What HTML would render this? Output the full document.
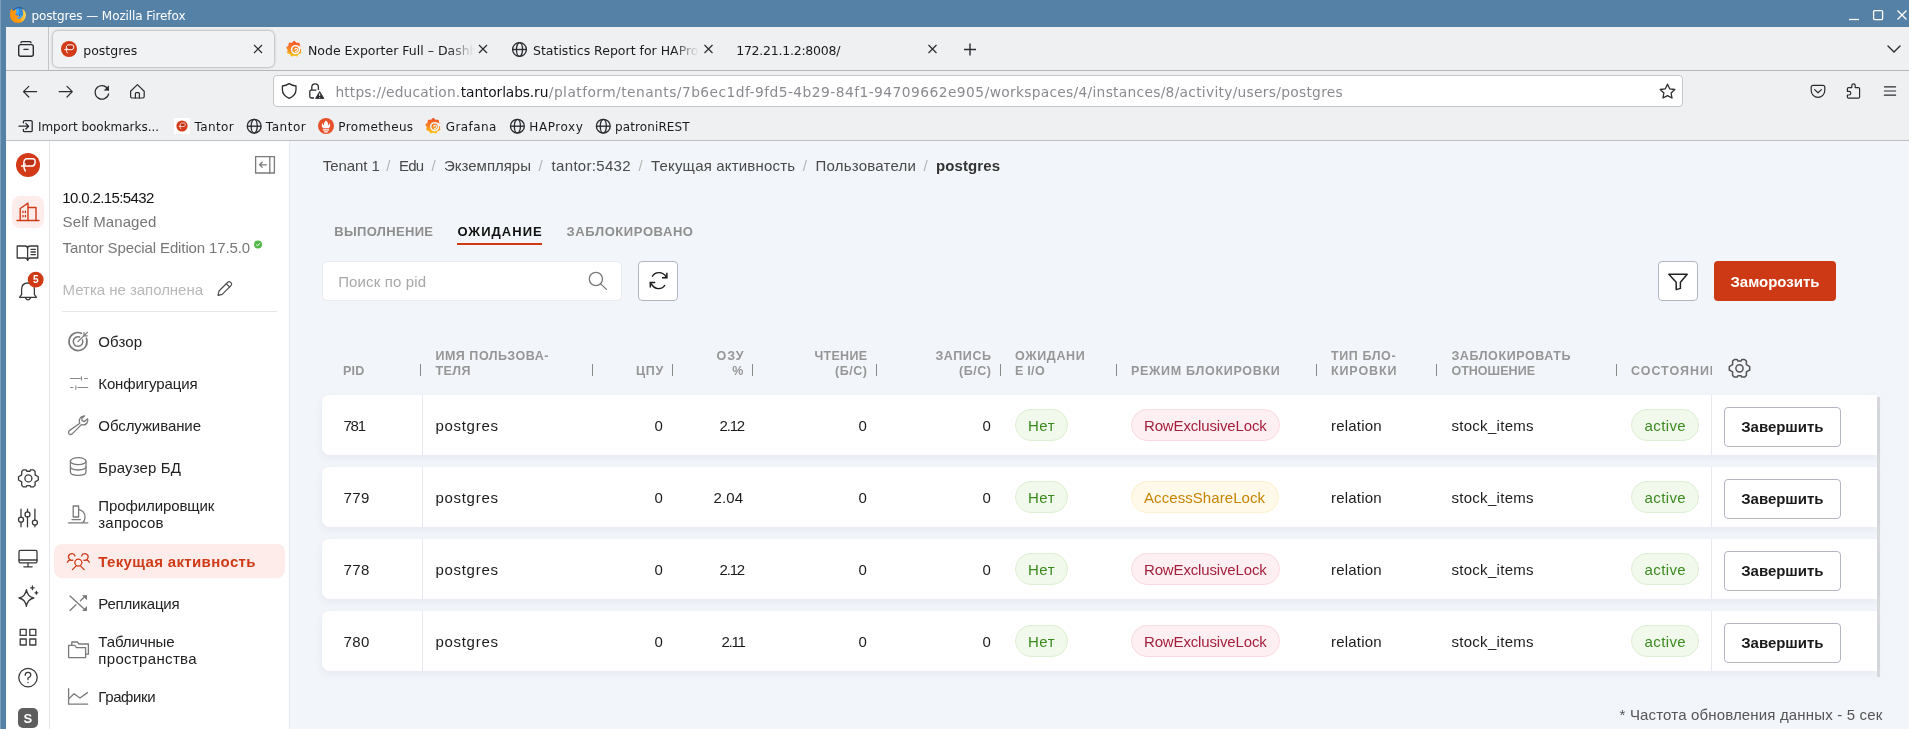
<!DOCTYPE html>
<html lang="ru">
<head>
<meta charset="utf-8">
<title>postgres</title>
<style>
*{box-sizing:border-box;margin:0;padding:0}
html,body{width:1909px;height:729px;overflow:hidden;background:#f2f5fa}
body{position:relative;will-change:transform;font-family:"Liberation Sans",sans-serif;font-size:15px;color:#1c1c1c}
.a{position:absolute}
.t{position:absolute;white-space:nowrap;line-height:1}
svg{position:absolute;overflow:visible}
/* browser chrome */
#titlebar{position:absolute;left:0;top:0;width:1909px;height:27px;background:#5581a6}
#leftborder{position:absolute;left:0;top:0;width:6px;height:729px;background:#5581a6}
#leftedge{position:absolute;left:0;top:0;width:1px;height:729px;background:#7c9fbd}
#chrome{position:absolute;left:6px;top:27px;width:1903px;height:114px;background:#eff0f2}
#tabline{position:absolute;left:6px;top:70px;width:1903px;height:1px;background:#b4b5b8}
#chromeend{position:absolute;left:6px;top:140px;width:1903px;height:1px;background:#bfc0c3}
#tabsep{position:absolute;left:48px;top:27px;width:1px;height:43px;background:#c3c4c7}
#tab1{position:absolute;left:53px;top:31px;width:221px;height:36px;border-radius:5px;background:#f1f2f4;box-shadow:0 0 3px rgba(0,0,0,.42)}
#urlbar{position:absolute;left:273px;top:75px;width:1410px;height:32px;border-radius:4px;background:#fff;border:1px solid #c6c7ca}
.fade{position:absolute;overflow:hidden;height:20px;-webkit-mask-image:linear-gradient(to right,#000 calc(100% - 26px),transparent);mask-image:linear-gradient(to right,#000 calc(100% - 26px),transparent)}
/* app */
#rail{position:absolute;left:6px;top:141px;width:43px;height:588px;background:#fff}
#railline{position:absolute;left:49px;top:141px;width:1px;height:588px;background:#e4e6ee}
#panel{position:absolute;left:50px;top:141px;width:239px;height:588px;background:#fff}
#panelline{position:absolute;left:289px;top:141px;width:1px;height:588px;background:#e8eaf2}
.row{position:absolute;left:322px;width:1555px;height:60px;background:#fff;border-radius:8px 0 0 8px;box-shadow:0 3px 8px rgba(70,80,120,.07)}
.csep{position:absolute;top:0;width:1px;height:60px;background:#e6e8f0}
.badge{position:absolute;height:32px;border-radius:16px;border:1px solid}
.g{background:#f1f9ed;border-color:#dcf0d3}
.rd{background:#fdeff2;border-color:#fbdbe1}
.yl{background:#fff9ea;border-color:#fdf0cc}
.hs{position:absolute;top:364px;width:1px;height:12px;background:#8a8a8a}
.btn{position:absolute;border:1px solid #b2b6c2;border-radius:4px;background:#fff}
</style>
</head>
<body>
<div id="titlebar"></div><div id="leftborder"></div><div id="leftedge"></div>
<div id="chrome"></div><div id="tabline"></div><div id="chromeend"></div><div id="tabsep"></div>
<div id="tab1"></div><div id="urlbar"></div>
<svg width="1909" height="145" viewBox="0 0 1909 145" style="left:0;top:0">
<defs><linearGradient id="ffg" x1="0" y1="0" x2="1" y2="0"><stop offset="0" stop-color="#ff9200"/><stop offset="0.6" stop-color="#ff9a0a"/><stop offset="0.85" stop-color="#ffc23a"/><stop offset="1" stop-color="#ffd95a"/></linearGradient></defs>
<circle cx="18.7" cy="13.3" r="6.3" fill="#3ea6f4"/>
<path d="M13.2 10.2Q18.4 5.2 23.6 9.6" fill="none" stroke="#285f9c" stroke-width="1.3"/>
<path d="M19.6 8.2Q20.8 12 19.2 16.8M21.6 10Q23 12.6 21.4 15.6M15.4 14.6L18 15.4" fill="none" stroke="#2a6cb4" stroke-width="1"/>
<path d="M11.3 8.8L13.4 10.9L15.9 9.3L16.5 12Q15 13.4 15.4 15Q17.6 15.3 19.8 16.2Q18.4 17.2 17 17.6Q17.4 19.3 19.4 19Q22.6 18 23.2 14Q23.4 11 21.6 8.4Q25.8 10.6 25.9 15A8 8 0 0 1 9.9 15Q9.8 11 11.3 8.8Z" fill="url(#ffg)"/>
<path d="M1849 19.5H1859" stroke="#fff" stroke-width="1.3"/>
<rect x="1873.6" y="10.6" width="9" height="9" rx="1" fill="none" stroke="#fff" stroke-width="1.3"/>
<path d="M1897.5 10.5L1906.5 19.5M1906.5 10.5L1897.5 19.5" stroke="#fff" stroke-width="1.3" fill="none"/>
<g fill="none" stroke="#2b2b30" stroke-width="1.4" stroke-linecap="round"><rect x="18.7" y="44.6" width="14.6" height="11.6" rx="2"/><path d="M21 42.8Q21 41.6 22.2 41.6H29.8Q31 41.6 31 42.8"/><path d="M24 49.4H28"/></g>
<g transform="translate(69 49) scale(0.667)"><circle r="12" fill="#d23a18"/><path d="M-2.6 -5.4 L5 -5.4 Q7.2 -5.2 6.8 -2.6 Q6.4 0.6 4 0.6 L-3.6 0.6 Q-4.4 -3.6 -2.6 -5.4Z" fill="#b53014"/><path d="M-6.4 1 L4.4 1 Q6.8 0.8 7.1 -2.6 Q7.4 -6.2 4.6 -6.2 L-1.6 -6.2 Q-4.4 -5.6 -4.2 -0.4 Q-4.2 4.2 -2.6 6" fill="none" stroke="#fff" stroke-width="1.45" stroke-linecap="round" stroke-linejoin="round"/><circle cx="-3" cy="-0.9" r="0.9" fill="#fff"/></g>
<path d="M254.0 45.0L262.0 53.0M262.0 45.0L254.0 53.0" stroke="#2b2b30" stroke-width="1.15" fill="none"/>
<defs><linearGradient id="gf294" gradientUnits="userSpaceOnUse" x1="0" y1="41.5" x2="0" y2="56.5"><stop offset="0" stop-color="#f8512a"/><stop offset="0.55" stop-color="#f98a1f"/><stop offset="1" stop-color="#fdc81a"/></linearGradient></defs><polygon points="294.20,41.50 296.25,43.36 299.02,43.25 299.40,46.00 301.59,47.70 300.11,50.04 300.70,52.75 298.06,53.60 296.77,56.05 294.20,55.00 291.63,56.05 290.34,53.60 287.70,52.75 288.29,50.04 286.81,47.70 289.00,46.00 289.38,43.25 292.15,43.36" fill="url(#gf294)" stroke="url(#gf294)" stroke-width="1.2" stroke-linejoin="round"/><circle cx="295.5" cy="49.6" r="3.9" fill="none" stroke="#f3f3f5" stroke-width="1.5"/><path d="M297.59999999999997 45.4L302.2 47L301.8 49.6L299.2 48.4Z" fill="#f3f3f5"/><path d="M295.4 51.6Q297.59999999999997 51.4 297.59999999999997 49.6Q297.4 48.2 296.0 48.2Q294.8 48.4 294.8 49.6" fill="none" stroke="#f3f3f5" stroke-width="1.1" stroke-linecap="round"/>
<path d="M479.0 45.0L487.0 53.0M487.0 45.0L479.0 53.0" stroke="#2b2b30" stroke-width="1.15" fill="none"/>
<g transform="translate(519.5 49.5)" fill="none" stroke="#2b2b30" stroke-width="1.35"><circle r="6.9"/><ellipse rx="3.04" ry="6.9"/><path d="M-6.9 0H6.9"/></g>
<path d="M704.5 45.0L712.5 53.0M712.5 45.0L704.5 53.0" stroke="#2b2b30" stroke-width="1.15" fill="none"/>
<path d="M928.5 45.0L936.5 53.0M936.5 45.0L928.5 53.0" stroke="#2b2b30" stroke-width="1.15" fill="none"/>
<path d="M964 49.5H976M970 43.5V55.5" stroke="#2b2b30" stroke-width="1.4" fill="none"/>
<path d="M1888 46L1894 52L1900 46" stroke="#2b2b30" stroke-width="1.4" fill="none" stroke-linecap="round" stroke-linejoin="round"/>
<g fill="none" stroke="#2b2b30" stroke-width="1.2" stroke-linecap="round" stroke-linejoin="round"><path d="M36.6 91.7H23.6M28.8 86.4L23.5 91.7L28.8 97"/><path d="M59.2 91.7H72.2M67 86.4L72.3 91.7L67 97"/><path d="M108.4 90.2A6.8 6.8 0 1 0 108.6 93.8"/><path d="M130.6 91.2L137.4 84.6L144.2 91.2V96.6Q144.2 98 142.8 98H132Q130.6 98 130.6 96.6Z"/><path d="M135.4 98V93.6Q135.4 92.6 136.4 92.6H138.4Q139.4 92.6 139.4 93.6V98"/></g>
<path d="M108.9 85.2V90.4H103.7Z" fill="#2b2b30"/>
<g fill="none" stroke="#2b2b30" stroke-width="1.3" stroke-linejoin="round"><path d="M289.2 83.6Q292.6 85.6 296 86V89.6Q296 95.6 289.2 98.4Q282.4 95.6 282.4 89.6V86Q285.8 85.6 289.2 83.6Z"/><path d="M316.4 90.2H311.2Q309.8 90.2 309.8 91.6V96.6Q309.8 98 311.2 98H314"/><path d="M311.8 90V87.2A3.3 3.3 0 0 1 318.4 87.2V90"/><path d="M1667.5 84.2L1669.7 88.8L1674.8 89.5L1671.1 93L1672 98L1667.5 95.6L1663 98L1663.9 93L1660.2 89.5L1665.3 88.8Z"/></g>
<path d="M319.7 91.6L323.8 98.4H315.6Z" fill="#2b2b30" stroke="#2b2b30" stroke-width="0.9" stroke-linejoin="round"/><path d="M319.7 93.4V96M319.7 97V97.9" stroke="#fff" stroke-width="1"/>
<g fill="none" stroke="#2b2b30" stroke-width="1.2" stroke-linecap="round" stroke-linejoin="round"><path d="M1813.2 85.4H1822.8Q1824.8 85.4 1824.8 87.4V90.6A6.8 6.8 0 0 1 1811.2 90.6V87.4Q1811.2 85.4 1813.2 85.4Z"/><path d="M1814.6 89.6L1818 92.8L1821.4 89.6"/><path d="M1851.8 87.6V85.6A1.7 1.7 0 0 1 1855.2 85.6V87.6H1858.4Q1859.6 87.6 1859.6 88.8V97Q1859.6 98.2 1858.4 98.2H1848.6Q1847.4 98.2 1847.4 97V95H1849A1.7 1.7 0 0 0 1849 91.4H1847.4V88.8Q1847.4 87.6 1848.6 87.6Z"/><path d="M1884.4 86.8H1895.6M1884.4 91H1895.6M1884.4 95.2H1895.6"/></g>
<g fill="none" stroke="#2b2b30" stroke-width="1.3" stroke-linecap="round" stroke-linejoin="round"><path d="M23.4 122.8V121.8Q23.4 120.6 24.6 120.6H31Q32.2 120.6 32.2 121.8V130.4Q32.2 131.6 31 131.6H24.6Q23.4 131.6 23.4 130.4V129.4"/><path d="M19 126.2H28.4M25.8 123.4L28.6 126.2L25.8 129"/></g>
<rect x="174" y="118" width="16" height="16" fill="#fff"/>
<g transform="translate(182 126) scale(0.467)"><circle r="12" fill="#d23a18"/><path d="M-2.6 -5.4 L5 -5.4 Q7.2 -5.2 6.8 -2.6 Q6.4 0.6 4 0.6 L-3.6 0.6 Q-4.4 -3.6 -2.6 -5.4Z" fill="#b53014"/><path d="M-6.4 1 L4.4 1 Q6.8 0.8 7.1 -2.6 Q7.4 -6.2 4.6 -6.2 L-1.6 -6.2 Q-4.4 -5.6 -4.2 -0.4 Q-4.2 4.2 -2.6 6" fill="none" stroke="#fff" stroke-width="1.45" stroke-linecap="round" stroke-linejoin="round"/><circle cx="-3" cy="-0.9" r="0.9" fill="#fff"/></g>
<g transform="translate(254.2 126.2)" fill="none" stroke="#2b2b30" stroke-width="1.35"><circle r="6.9"/><ellipse rx="3.04" ry="6.9"/><path d="M-6.9 0H6.9"/></g>
<circle cx="326" cy="126" r="8" fill="#e6522c"/><path d="M326 120.4Q328.9 123 327.9 125.4Q329.9 125 329.3 122.8Q331.3 126 328.9 128.2H323.1Q320.7 126 322.7 122.8Q322.5 125 324.1 125.4Q323.3 122.6 326 120.4ZM322.9 129.2H329.1V130.4H322.9ZM323.9 131.2H328.1V132Q326 133 323.9 132Z" fill="#fff"/>
<defs><linearGradient id="gf433" gradientUnits="userSpaceOnUse" x1="0" y1="118.5" x2="0" y2="133.5"><stop offset="0" stop-color="#f8512a"/><stop offset="0.55" stop-color="#f98a1f"/><stop offset="1" stop-color="#fdc81a"/></linearGradient></defs><polygon points="433.30,118.50 435.35,120.36 438.12,120.25 438.50,123.00 440.69,124.70 439.21,127.04 439.80,129.75 437.16,130.60 435.87,133.05 433.30,132.00 430.73,133.05 429.44,130.60 426.80,129.75 427.39,127.04 425.91,124.70 428.10,123.00 428.48,120.25 431.25,120.36" fill="url(#gf433)" stroke="url(#gf433)" stroke-width="1.2" stroke-linejoin="round"/><circle cx="434.6" cy="126.6" r="3.9" fill="none" stroke="#f3f3f5" stroke-width="1.5"/><path d="M436.7 122.4L441.3 124L440.90000000000003 126.6L438.3 125.4Z" fill="#f3f3f5"/><path d="M434.5 128.6Q436.7 128.4 436.7 126.6Q436.5 125.2 435.1 125.2Q433.90000000000003 125.4 433.90000000000003 126.6" fill="none" stroke="#f3f3f5" stroke-width="1.1" stroke-linecap="round"/>
<g transform="translate(517.4 126.2)" fill="none" stroke="#2b2b30" stroke-width="1.35"><circle r="6.9"/><ellipse rx="3.04" ry="6.9"/><path d="M-6.9 0H6.9"/></g>
<g transform="translate(603.3 126.2)" fill="none" stroke="#2b2b30" stroke-width="1.35"><circle r="6.9"/><ellipse rx="3.04" ry="6.9"/><path d="M-6.9 0H6.9"/></g>
</svg>
<span class="t" style='top:10px;font-size:12px;color:#fff;left:31.4px;letter-spacing:-0.09px;font-family:"DejaVu Sans","Liberation Sans",sans-serif;'>postgres — Mozilla Firefox</span>
<span class="t" style='top:45px;font-size:12.5px;color:#1b1b1f;left:83.3px;letter-spacing:-0.01px;font-family:"DejaVu Sans","Liberation Sans",sans-serif;'>postgres</span>
<div class="fade" style="left:308px;top:39px;width:166px"><span class="t" style='top:6px;font-size:12.5px;color:#1b1b1f;left:0.0px;font-family:"DejaVu Sans","Liberation Sans",sans-serif;'>Node Exporter Full – Dashboards – Grafana</span></div>
<div class="fade" style="left:533px;top:39px;width:166px"><span class="t" style='top:6px;font-size:12.5px;color:#1b1b1f;left:0.0px;font-family:"DejaVu Sans","Liberation Sans",sans-serif;'>Statistics Report for HAProxy</span></div>
<span class="t" style='top:45px;font-size:12.5px;color:#1b1b1f;left:736.2px;letter-spacing:-0.24px;font-family:"DejaVu Sans","Liberation Sans",sans-serif;'>172.21.1.2:8008/</span>
<span class="t" style='top:86px;font-size:13.8px;color:#8a8a90;left:335.4px;letter-spacing:0.15px;font-family:"DejaVu Sans","Liberation Sans",sans-serif;'>https://education.</span>
<span class="t" style='top:86px;font-size:13.8px;color:#15141a;left:460.8px;letter-spacing:-0.13px;font-family:"DejaVu Sans","Liberation Sans",sans-serif;'>tantorlabs.ru</span>
<span class="t" style='top:86px;font-size:13.8px;color:#8a8a90;left:548.8px;letter-spacing:0.45px;font-family:"DejaVu Sans","Liberation Sans",sans-serif;'>/platform/tenants/7b6ec1df-9fd5-4b29-84f1-94709662e905</span>
<span class="t" style='top:86px;font-size:13.8px;color:#8a8a90;left:984.8px;letter-spacing:0.28px;font-family:"DejaVu Sans","Liberation Sans",sans-serif;'>/workspaces/4/instances/8/activity/users/postgres</span>
<span class="t" style='top:121px;font-size:12px;color:#1b1b1f;left:37.9px;letter-spacing:-0.02px;font-family:"DejaVu Sans","Liberation Sans",sans-serif;'>Import bookmarks...</span>
<span class="t" style='top:121px;font-size:12px;color:#1b1b1f;left:194.4px;letter-spacing:0.40px;font-family:"DejaVu Sans","Liberation Sans",sans-serif;'>Tantor</span>
<span class="t" style='top:121px;font-size:12px;color:#1b1b1f;left:265.8px;letter-spacing:0.52px;font-family:"DejaVu Sans","Liberation Sans",sans-serif;'>Tantor</span>
<span class="t" style='top:121px;font-size:12px;color:#1b1b1f;left:338.3px;letter-spacing:0.35px;font-family:"DejaVu Sans","Liberation Sans",sans-serif;'>Prometheus</span>
<span class="t" style='top:121px;font-size:12px;color:#1b1b1f;left:445.7px;letter-spacing:0.41px;font-family:"DejaVu Sans","Liberation Sans",sans-serif;'>Grafana</span>
<span class="t" style='top:121px;font-size:12px;color:#1b1b1f;left:529.3px;letter-spacing:0.57px;font-family:"DejaVu Sans","Liberation Sans",sans-serif;'>HAProxy</span>
<span class="t" style='top:121px;font-size:12px;color:#1b1b1f;left:615.0px;letter-spacing:0.11px;font-family:"DejaVu Sans","Liberation Sans",sans-serif;'>patroniREST</span>
<div id="rail"></div><div id="railline"></div><div id="panel"></div><div id="panelline"></div>
<div class="a" style="left:12px;top:196px;width:32px;height:32px;border-radius:8px;background:#fdecea"></div>
<div class="a" style="left:54px;top:544px;width:231px;height:34px;border-radius:8px;background:#fdecea"></div>
<div class="a" style="left:62px;top:311px;width:215px;height:1px;background:#e4e6ee"></div>
<div class="a" style="left:18px;top:708px;width:20px;height:20px;border-radius:5px;background:#5e5e5e"></div>
<svg width="300" height="588" viewBox="0 141 300 588" style="left:0;top:141px">
<g transform="translate(28 165) scale(1.000)"><circle r="12" fill="#d23a18"/><path d="M-2.6 -5.4 L5 -5.4 Q7.2 -5.2 6.8 -2.6 Q6.4 0.6 4 0.6 L-3.6 0.6 Q-4.4 -3.6 -2.6 -5.4Z" fill="#b53014"/><path d="M-6.4 1 L4.4 1 Q6.8 0.8 7.1 -2.6 Q7.4 -6.2 4.6 -6.2 L-1.6 -6.2 Q-4.4 -5.6 -4.2 -0.4 Q-4.2 4.2 -2.6 6" fill="none" stroke="#fff" stroke-width="1.45" stroke-linecap="round" stroke-linejoin="round"/><circle cx="-3" cy="-0.9" r="0.9" fill="#fff"/></g>
<g fill="none" stroke="#cf3a17" stroke-width="1.4" stroke-linejoin="round" stroke-linecap="round"><path d="M17 220.5H39"/><path d="M20.2 220.5V208.5L28 203.2V220.5"/><path d="M28 207.5H36V220.5"/><path d="M23 211.2V212.6M25.4 211.2V212.6M23 215.4V216.8M25.4 215.4V216.8"/></g>
<g fill="none" stroke="#3a3a3a" stroke-width="1.3" stroke-linejoin="round" stroke-linecap="round"><path d="M17.2 246V258H25Q27.4 258 27.6 260.4Q27.8 258 30.2 258H37.8V246H30.2Q27.6 246 27.6 248.4Q27.6 246 25 246Z"/><path d="M27.6 248.4V260"/><path d="M31 249.4H35.4M31 252H35.4M31 254.6H35.4"/></g>
<g fill="none" stroke="#3a3a3a" stroke-width="1.3" stroke-linejoin="round" stroke-linecap="round"><path d="M19.6 297.4L21.6 294.4V289.4Q21.6 283 28 283Q34.4 283 34.4 289.4V294.4L36.4 297.4Z"/><path d="M25.4 297.8Q28 302 30.6 297.8"/></g>
<circle cx="35.7" cy="279.7" r="7.9" fill="#cf3a17"/>
<g transform="translate(28.4 478.4) scale(0.97)" fill="none" stroke="#3a3a3a" stroke-width="1.35" stroke-linejoin="round"><path d="M-5.1 -8.8H-2.3L-1.7 -7.4H1.7L2.3 -8.8H5.1L6.9 -7.2V-3.6L10.2 -1.7V1.7L6.9 3.6V7.2L5.1 8.8H2.3L1.7 7.4H-1.7L-2.3 8.8H-5.1L-6.9 7.2V3.6L-10.2 1.7V-1.7L-6.9 -3.6V-7.2Z"/><circle r="3.6"/></g>
<g fill="none" stroke="#3a3a3a" stroke-width="1.3" stroke-linecap="round"><path d="M21 509.2V517.2M21 522.2V526.8M27.5 509.2V511.8M27.5 517V526.8M34.9 509.2V520M34.9 525.2V526.8"/><circle cx="21" cy="519.7" r="2.5"/><circle cx="27.5" cy="514.4" r="2.5"/><circle cx="34.9" cy="522.6" r="2.5"/></g>
<g fill="none" stroke="#3a3a3a" stroke-width="1.3" stroke-linejoin="round" stroke-linecap="round"><rect x="19" y="550.4" width="18" height="12.4" rx="1.4"/><path d="M19 560H37M28 563V566.6M23.8 566.8H32.2"/></g>
<g fill="none" stroke="#3a3a3a" stroke-width="1.3" stroke-linejoin="round" stroke-linecap="round"><path d="M26.4 589.6Q27.4 596.6 33.8 598Q27.4 599.4 26.4 606.4Q25.4 599.4 19 598Q25.4 596.6 26.4 589.6Z"/><path d="M32.4 586V589.6M30.6 587.8H34.2M36.4 591.4V594.2M35 592.8H37.8"/></g>
<g fill="none" stroke="#3a3a3a" stroke-width="1.3" stroke-linejoin="round"><rect x="20.2" y="629.4" width="6" height="6"/><rect x="29.8" y="629.4" width="6" height="6"/><rect x="20.2" y="639" width="6" height="6"/><rect x="29.8" y="639" width="6" height="6"/></g>
<g fill="none" stroke="#3a3a3a" stroke-width="1.3" stroke-linecap="round"><circle cx="28" cy="677.6" r="9.2"/><path d="M25.2 675.2Q25.2 672.4 28 672.4Q30.8 672.4 30.8 675Q30.8 676.8 28 678V679.6"/><path d="M28 682.4V682.6"/></g>
<g fill="none" stroke="#7a7a7a" stroke-width="1.3" stroke-linejoin="round" stroke-linecap="round"><rect x="255.6" y="156.6" width="18.8" height="16.4"/><path d="M269.8 156.6V173"/><path d="M266.4 164.8H259.6M262.2 162.2L259.6 164.8L262.2 167.4"/></g>
<circle cx="258" cy="244.4" r="4" fill="#52b848"/><path d="M256.2 244.5L257.6 245.9L260 243.2" fill="none" stroke="#fff" stroke-width="1"/>
<g fill="none" stroke="#4a4a4a" stroke-width="1.15" stroke-linejoin="round" stroke-linecap="round"><path d="M218 295.4L219 291L228 282Q229.2 281 230.4 282.2L231.2 283Q232.2 284.2 231.2 285.4L222.2 294.4Z"/><path d="M226.4 283.8L229.6 287"/></g>
<g fill="none" stroke="#7a7a7a" stroke-width="1.3" stroke-linejoin="round" stroke-linecap="round"><path d="M86.4 338.2A9 9 0 1 1 81.4 333.2" stroke-width="1.7"/><path d="M82.6 340A4.8 4.8 0 1 1 79.6 337" stroke-width="1.5"/><path d="M78 341.6L87.4 332.4"/><path d="M84 335.8H87.2M84 335.8V332.6" /></g>
<g fill="none" stroke="#8a8a8a" stroke-width="1.1"><path d="M70 378.5H80.8M84 378.5H87.8M81.5 376.2V380.4M70 387.5H73.4M77.4 387.5H88.2M75.8 385.6V389.8"/></g>
<g fill="none" stroke="#7a7a7a" stroke-width="1.3" stroke-linejoin="round" stroke-linecap="round"><path d="M84.6 415.8Q80.4 416.2 79.4 419.8Q79 421.6 79.8 423.2L69.4 430.6Q67.6 432.4 69.2 434Q70.8 435.4 72.4 433.6L81.4 424.6Q85 425.8 87 423Q88.2 421 87.6 418.8L84.4 421.6L82 420.6L81.8 418.2Z"/></g>
<g fill="none" stroke="#7a7a7a" stroke-width="1.3" stroke-linejoin="round" stroke-linecap="round"><ellipse cx="78.2" cy="461.2" rx="7.8" ry="3.5"/><path d="M70.4 461.2V472Q70.4 475.4 78.2 475.4Q86 475.4 86 472V461.2"/><path d="M70.4 466.6Q70.4 470 78.2 470Q86 470 86 466.6"/></g>
<g fill="none" stroke="#7a7a7a" stroke-width="1.3" stroke-linejoin="round" stroke-linecap="round"><path d="M68.4 522.8H87.8"/><path d="M72 519.6H80.4"/><path d="M73.2 506V517H78.6V506Z"/><path d="M78.6 509.4Q85 511 85 517.2Q85 520.6 82.8 522.6"/></g>
<g fill="none" stroke="#cf3a17" stroke-width="1.3" stroke-linejoin="round" stroke-linecap="round"><circle cx="78.3" cy="562.6" r="3.5"/><path d="M75.8 566.4L72.4 569.6M80.8 566.4L84.2 569.6"/><path d="M75 556A3.3 3.3 0 1 0 72.8 560.2"/><path d="M70.4 559.8Q68 560.4 67.3 562.4"/><path d="M81.6 556A3.3 3.3 0 1 1 83.8 560.2"/><path d="M86.2 559.8Q88.6 560.4 89.3 562.4"/></g>
<g fill="none" stroke="#7a7a7a" stroke-width="1.3" stroke-linejoin="round" stroke-linecap="round"><path d="M70 596L85.6 610.2"/><path d="M70 610.4L76 604.8M80.4 600.8L85.6 596"/></g>
<path d="M87 595.2V600.2L82 595.2ZM87 611V606L82 611Z" fill="#7a7a7a"/>
<g fill="none" stroke="#7a7a7a" stroke-width="1.3" stroke-linejoin="round" stroke-linecap="round"><path d="M68.6 647.6V657.6H85.6V647.6H76.4L74.8 645.4H68.6Z"/><path d="M71.8 645.2V642H77.4L79 644H88.4V654.2H85.8"/></g>
<g fill="none" stroke="#7a7a7a" stroke-width="1.3" stroke-linejoin="round" stroke-linecap="round"><path d="M68.6 688.6V704.2H87.6"/><path d="M69 698.6L74 693.8L80 698L87.4 692.6"/></g>
</svg>
<span class="t" style='top:275px;font-size:10px;color:#fff;font-weight:bold;left:32.9px;'>5</span>
<span class="t" style='top:712px;font-size:13px;color:#fff;font-weight:bold;left:23.6px;'>S</span>
<span class="t" style='top:190px;font-size:15px;color:#111;left:62.3px;letter-spacing:-0.62px;'>10.0.2.15:5432</span>
<span class="t" style='top:214px;font-size:15px;color:#777;left:62.6px;letter-spacing:0.11px;'>Self Managed</span>
<span class="t" style='top:240px;font-size:15px;color:#777;left:62.6px;letter-spacing:-0.12px;'>Tantor Special Edition 17.5.0</span>
<span class="t" style='top:282px;font-size:15px;color:#b8b8b8;left:62.6px;letter-spacing:-0.03px;'>Метка не заполнена</span>
<span class="t" style='top:334px;font-size:15px;color:#222;left:98.3px;letter-spacing:0.09px;'>Обзор</span>
<span class="t" style='top:376px;font-size:15px;color:#222;left:98.3px;letter-spacing:-0.13px;'>Конфигурация</span>
<span class="t" style='top:418px;font-size:15px;color:#222;left:98.3px;letter-spacing:-0.08px;'>Обслуживание</span>
<span class="t" style='top:460px;font-size:15px;color:#222;left:98.3px;letter-spacing:0.14px;'>Браузер БД</span>
<span class="t" style='top:498px;font-size:15px;color:#222;left:98.3px;letter-spacing:-0.10px;'>Профилировщик</span>
<span class="t" style='top:515px;font-size:15px;color:#222;left:98.3px;letter-spacing:0.18px;'>запросов</span>
<span class="t" style='top:554px;font-size:15px;color:#cf3a17;left:98.3px;letter-spacing:0.35px;font-weight:bold;'>Текущая активность</span>
<span class="t" style='top:596px;font-size:15px;color:#222;left:98.3px;letter-spacing:-0.22px;'>Репликация</span>
<span class="t" style='top:634px;font-size:15px;color:#222;left:98.3px;letter-spacing:-0.10px;'>Табличные</span>
<span class="t" style='top:651px;font-size:15px;color:#222;left:98.3px;letter-spacing:0.33px;'>пространства</span>
<span class="t" style='top:689px;font-size:15px;color:#222;left:98.3px;letter-spacing:-0.39px;'>Графики</span>
<span class="t" style='top:158px;font-size:15px;color:#4a4a4a;left:322.8px;letter-spacing:-0.08px;'>Tenant 1</span>
<span class="t" style='top:158px;font-size:15px;color:#b5b5b5;left:386.2px;'>/</span>
<span class="t" style='top:158px;font-size:15px;color:#4a4a4a;left:399.0px;letter-spacing:-0.85px;'>Edu</span>
<span class="t" style='top:158px;font-size:15px;color:#b5b5b5;left:431.4px;'>/</span>
<span class="t" style='top:158px;font-size:15px;color:#4a4a4a;left:444.0px;'>Экземпляры</span>
<span class="t" style='top:158px;font-size:15px;color:#b5b5b5;left:538.6px;'>/</span>
<span class="t" style='top:158px;font-size:15px;color:#4a4a4a;left:551.6px;letter-spacing:0.31px;'>tantor:5432</span>
<span class="t" style='top:158px;font-size:15px;color:#b5b5b5;left:638.4px;'>/</span>
<span class="t" style='top:158px;font-size:15px;color:#4a4a4a;left:651.0px;letter-spacing:0.18px;'>Текущая активность</span>
<span class="t" style='top:158px;font-size:15px;color:#b5b5b5;left:802.8px;'>/</span>
<span class="t" style='top:158px;font-size:15px;color:#4a4a4a;left:815.4px;letter-spacing:0.24px;'>Пользователи</span>
<span class="t" style='top:158px;font-size:15px;color:#b5b5b5;left:923.4px;'>/</span>
<span class="t" style='top:158px;font-size:15px;color:#333;left:936.0px;letter-spacing:0.09px;font-weight:bold;'>postgres</span>
<span class="t" style='top:225px;font-size:13px;color:#8e8e8e;left:334.2px;letter-spacing:0.33px;font-weight:bold;'>ВЫПОЛНЕНИЕ</span>
<span class="t" style='top:225px;font-size:13px;color:#111;left:457.4px;letter-spacing:1.04px;font-weight:bold;'>ОЖИДАНИЕ</span>
<span class="t" style='top:225px;font-size:13px;color:#8e8e8e;left:566.6px;letter-spacing:0.59px;font-weight:bold;'>ЗАБЛОКИРОВАНО</span>
<div class="a" style="left:457px;top:243px;width:85px;height:2px;background:#cf3a17"></div>
<div class="a" style="left:322px;top:261px;width:300px;height:40px;border-radius:5px;background:#fff;border:1px solid #e9ebf2"></div>
<span class="t" style='top:274px;font-size:15px;color:#a8a8a8;left:338.2px;letter-spacing:0.13px;'>Поиск по pid</span>
<div class="btn" style="left:638px;top:261px;width:40px;height:40px"></div>
<div class="btn" style="left:1658px;top:261px;width:40px;height:40px"></div>
<div class="a" style="left:1714px;top:261px;width:122px;height:40px;border-radius:4px;background:#ce3915"></div>
<span class="t" style='top:274px;font-size:15px;color:#fff;left:1730.4px;font-weight:bold;'>Заморозить</span>
<svg width="1619" height="588" viewBox="290 141 1619 588" style="left:290px;top:141px">
<g fill="none" stroke="#777" stroke-width="1.3" stroke-linecap="round"><circle cx="595.9" cy="279" r="6.6"/><path d="M600.4 283.6L606.4 289.4"/></g>
<g fill="none" stroke="#1a1a1a" stroke-width="1.45" stroke-linejoin="miter"><path d="M652.2 276.6Q654.2 272.6 659 272.6Q663.6 272.6 666.2 276.8"/><path d="M666.9 272.8V277.7H662"/><path d="M664.9 285Q663 288.6 658.4 288.6Q653.8 288.6 651 283.4"/><path d="M650.3 287.4V282.5H655.2"/></g>
<g fill="none" stroke="#222" stroke-width="1.3" stroke-linejoin="round" stroke-linecap="round"><path d="M1668.8 274.2H1687.2L1680.4 282.2V288.4L1676.2 289.6V282.2Z" stroke-width="1.5"/></g>
<g transform="translate(1739.5 368.3) scale(1.0)" fill="none" stroke="#555" stroke-width="1.5" stroke-linejoin="round"><path d="M-5.1 -8.8H-2.3L-1.7 -7.4H1.7L2.3 -8.8H5.1L6.9 -7.2V-3.6L10.2 -1.7V1.7L6.9 3.6V7.2L5.1 8.8H2.3L1.7 7.4H-1.7L-2.3 8.8H-5.1L-6.9 7.2V3.6L-10.2 1.7V-1.7L-6.9 -3.6V-7.2Z"/><circle r="3.6"/></g>
</svg>
<span class="t" style='top:365px;font-size:12.5px;color:#969696;left:343.0px;letter-spacing:0.28px;font-weight:bold;'>PID</span>
<span class="t" style='top:350px;font-size:12.5px;color:#969696;left:435.4px;letter-spacing:0.53px;font-weight:bold;'>ИМЯ ПОЛЬЗОВА-</span>
<span class="t" style='top:365px;font-size:12.5px;color:#969696;left:435.4px;letter-spacing:0.49px;font-weight:bold;'>ТЕЛЯ</span>
<span class="t" style='top:365px;font-size:12.5px;color:#969696;right:1244.9px;letter-spacing:0.75px;font-weight:bold;'>ЦПУ</span>
<span class="t" style='top:350px;font-size:12.5px;color:#969696;right:1164.5px;letter-spacing:1.07px;font-weight:bold;'>ОЗУ</span>
<span class="t" style='top:365px;font-size:12.5px;color:#969696;right:1165.6px;font-weight:bold;'>%</span>
<span class="t" style='top:350px;font-size:12.5px;color:#969696;right:1041.7px;letter-spacing:0.30px;font-weight:bold;'>ЧТЕНИЕ</span>
<span class="t" style='top:365px;font-size:12.5px;color:#969696;right:1041.5px;letter-spacing:0.55px;font-weight:bold;'>(Б/С)</span>
<span class="t" style='top:350px;font-size:12.5px;color:#969696;right:917.4px;letter-spacing:0.58px;font-weight:bold;'>ЗАПИСЬ</span>
<span class="t" style='top:365px;font-size:12.5px;color:#969696;right:917.5px;letter-spacing:0.55px;font-weight:bold;'>(Б/С)</span>
<span class="t" style='top:350px;font-size:12.5px;color:#969696;left:1015.0px;letter-spacing:0.67px;font-weight:bold;'>ОЖИДАНИ</span>
<span class="t" style='top:365px;font-size:12.5px;color:#969696;left:1015.0px;letter-spacing:0.28px;font-weight:bold;'>Е I/O</span>
<span class="t" style='top:365px;font-size:12.5px;color:#969696;left:1131.0px;letter-spacing:0.71px;font-weight:bold;'>РЕЖИМ БЛОКИРОВКИ</span>
<span class="t" style='top:350px;font-size:12.5px;color:#969696;left:1331.0px;letter-spacing:0.60px;font-weight:bold;'>ТИП БЛО-</span>
<span class="t" style='top:365px;font-size:12.5px;color:#969696;left:1331.0px;letter-spacing:0.87px;font-weight:bold;'>КИРОВКИ</span>
<span class="t" style='top:350px;font-size:12.5px;color:#969696;left:1451.4px;letter-spacing:0.60px;font-weight:bold;'>ЗАБЛОКИРОВАТЬ</span>
<span class="t" style='top:365px;font-size:12.5px;color:#969696;left:1451.4px;letter-spacing:0.03px;font-weight:bold;'>ОТНОШЕНИЕ</span>
<div class="a" style="left:1631px;top:360px;width:81px;height:20px;overflow:hidden"><span class="t" style='top:5px;font-size:12.5px;color:#969696;left:0.0px;letter-spacing:0.98px;font-weight:bold;'>СОСТОЯНИЕ</span></div>
<div class="hs" style="left:420px"></div>
<div class="hs" style="left:592px"></div>
<div class="hs" style="left:672px"></div>
<div class="hs" style="left:752px"></div>
<div class="hs" style="left:876px"></div>
<div class="hs" style="left:1000px"></div>
<div class="hs" style="left:1116px"></div>
<div class="hs" style="left:1316px"></div>
<div class="hs" style="left:1436px"></div>
<div class="hs" style="left:1616px"></div>
<div class="a" style="left:1877px;top:397px;width:3px;height:280px;background:#d8dade"></div>
<div class="row" style="top:395px"><div class="csep" style="left:100px"></div><div class="csep" style="left:1389px"></div></div>
<span class="t" style='top:418px;font-size:15px;color:#1c1c1c;left:343.4px;letter-spacing:-1.20px;'>781</span>
<span class="t" style='top:418px;font-size:15px;color:#1c1c1c;left:435.4px;letter-spacing:0.72px;'>postgres</span>
<span class="t" style='top:418px;font-size:15px;color:#1c1c1c;left:654.6px;'>0</span>
<span class="t" style='top:418px;font-size:15px;color:#1c1c1c;left:719.6px;letter-spacing:-1.20px;'>2.12</span>
<span class="t" style='top:418px;font-size:15px;color:#1c1c1c;left:858.6px;'>0</span>
<span class="t" style='top:418px;font-size:15px;color:#1c1c1c;left:982.6px;'>0</span>
<div class="badge g" style="left:1015px;top:409px;width:53px"></div>
<span class="t" style='top:418px;font-size:15px;color:#3b8a1e;left:1028.0px;letter-spacing:0.53px;'>Нет</span>
<div class="badge rd" style="left:1131px;top:409px;width:149px"></div>
<span class="t" style='top:418px;font-size:15px;color:#a41f3b;left:1144.0px;letter-spacing:-0.15px;'>RowExclusiveLock</span>
<span class="t" style='top:418px;font-size:15px;color:#1c1c1c;left:1331.0px;letter-spacing:0.20px;'>relation</span>
<span class="t" style='top:418px;font-size:15px;color:#1c1c1c;left:1451.4px;letter-spacing:0.30px;'>stock_items</span>
<div class="badge g" style="left:1631px;top:409px;width:68px"></div>
<span class="t" style='top:418px;font-size:15px;color:#3b8a1e;left:1644.6px;letter-spacing:0.36px;'>active</span>
<div class="btn" style="left:1724px;top:407px;width:117px;height:40px"></div>
<span class="t" style='top:419px;font-size:15px;color:#1a1a1a;left:1741.2px;letter-spacing:-0.02px;font-weight:bold;'>Завершить</span>
<div class="row" style="top:467px"><div class="csep" style="left:100px"></div><div class="csep" style="left:1389px"></div></div>
<span class="t" style='top:490px;font-size:15px;color:#1c1c1c;left:343.4px;letter-spacing:0.48px;'>779</span>
<span class="t" style='top:490px;font-size:15px;color:#1c1c1c;left:435.4px;letter-spacing:0.72px;'>postgres</span>
<span class="t" style='top:490px;font-size:15px;color:#1c1c1c;left:654.6px;'>0</span>
<span class="t" style='top:490px;font-size:15px;color:#1c1c1c;left:713.4px;letter-spacing:0.20px;'>2.04</span>
<span class="t" style='top:490px;font-size:15px;color:#1c1c1c;left:858.6px;'>0</span>
<span class="t" style='top:490px;font-size:15px;color:#1c1c1c;left:982.6px;'>0</span>
<div class="badge g" style="left:1015px;top:481px;width:53px"></div>
<span class="t" style='top:490px;font-size:15px;color:#3b8a1e;left:1028.0px;letter-spacing:0.53px;'>Нет</span>
<div class="badge yl" style="left:1131px;top:481px;width:148px"></div>
<span class="t" style='top:490px;font-size:15px;color:#c78400;left:1144.0px;letter-spacing:0.07px;'>AccessShareLock</span>
<span class="t" style='top:490px;font-size:15px;color:#1c1c1c;left:1331.0px;letter-spacing:0.20px;'>relation</span>
<span class="t" style='top:490px;font-size:15px;color:#1c1c1c;left:1451.4px;letter-spacing:0.30px;'>stock_items</span>
<div class="badge g" style="left:1631px;top:481px;width:68px"></div>
<span class="t" style='top:490px;font-size:15px;color:#3b8a1e;left:1644.6px;letter-spacing:0.36px;'>active</span>
<div class="btn" style="left:1724px;top:479px;width:117px;height:40px"></div>
<span class="t" style='top:491px;font-size:15px;color:#1a1a1a;left:1741.2px;letter-spacing:-0.02px;font-weight:bold;'>Завершить</span>
<div class="row" style="top:539px"><div class="csep" style="left:100px"></div><div class="csep" style="left:1389px"></div></div>
<span class="t" style='top:562px;font-size:15px;color:#1c1c1c;left:343.4px;letter-spacing:0.48px;'>778</span>
<span class="t" style='top:562px;font-size:15px;color:#1c1c1c;left:435.4px;letter-spacing:0.72px;'>postgres</span>
<span class="t" style='top:562px;font-size:15px;color:#1c1c1c;left:654.6px;'>0</span>
<span class="t" style='top:562px;font-size:15px;color:#1c1c1c;left:719.6px;letter-spacing:-1.20px;'>2.12</span>
<span class="t" style='top:562px;font-size:15px;color:#1c1c1c;left:858.6px;'>0</span>
<span class="t" style='top:562px;font-size:15px;color:#1c1c1c;left:982.6px;'>0</span>
<div class="badge g" style="left:1015px;top:553px;width:53px"></div>
<span class="t" style='top:562px;font-size:15px;color:#3b8a1e;left:1028.0px;letter-spacing:0.53px;'>Нет</span>
<div class="badge rd" style="left:1131px;top:553px;width:149px"></div>
<span class="t" style='top:562px;font-size:15px;color:#a41f3b;left:1144.0px;letter-spacing:-0.15px;'>RowExclusiveLock</span>
<span class="t" style='top:562px;font-size:15px;color:#1c1c1c;left:1331.0px;letter-spacing:0.20px;'>relation</span>
<span class="t" style='top:562px;font-size:15px;color:#1c1c1c;left:1451.4px;letter-spacing:0.30px;'>stock_items</span>
<div class="badge g" style="left:1631px;top:553px;width:68px"></div>
<span class="t" style='top:562px;font-size:15px;color:#3b8a1e;left:1644.6px;letter-spacing:0.36px;'>active</span>
<div class="btn" style="left:1724px;top:551px;width:117px;height:40px"></div>
<span class="t" style='top:563px;font-size:15px;color:#1a1a1a;left:1741.2px;letter-spacing:-0.02px;font-weight:bold;'>Завершить</span>
<div class="row" style="top:611px"><div class="csep" style="left:100px"></div><div class="csep" style="left:1389px"></div></div>
<span class="t" style='top:634px;font-size:15px;color:#1c1c1c;left:343.4px;letter-spacing:0.48px;'>780</span>
<span class="t" style='top:634px;font-size:15px;color:#1c1c1c;left:435.4px;letter-spacing:0.72px;'>postgres</span>
<span class="t" style='top:634px;font-size:15px;color:#1c1c1c;left:654.6px;'>0</span>
<span class="t" style='top:634px;font-size:15px;color:#1c1c1c;left:721.4px;letter-spacing:-1.20px;'>2.11</span>
<span class="t" style='top:634px;font-size:15px;color:#1c1c1c;left:858.6px;'>0</span>
<span class="t" style='top:634px;font-size:15px;color:#1c1c1c;left:982.6px;'>0</span>
<div class="badge g" style="left:1015px;top:625px;width:53px"></div>
<span class="t" style='top:634px;font-size:15px;color:#3b8a1e;left:1028.0px;letter-spacing:0.53px;'>Нет</span>
<div class="badge rd" style="left:1131px;top:625px;width:149px"></div>
<span class="t" style='top:634px;font-size:15px;color:#a41f3b;left:1144.0px;letter-spacing:-0.15px;'>RowExclusiveLock</span>
<span class="t" style='top:634px;font-size:15px;color:#1c1c1c;left:1331.0px;letter-spacing:0.20px;'>relation</span>
<span class="t" style='top:634px;font-size:15px;color:#1c1c1c;left:1451.4px;letter-spacing:0.30px;'>stock_items</span>
<div class="badge g" style="left:1631px;top:625px;width:68px"></div>
<span class="t" style='top:634px;font-size:15px;color:#3b8a1e;left:1644.6px;letter-spacing:0.36px;'>active</span>
<div class="btn" style="left:1724px;top:623px;width:117px;height:40px"></div>
<span class="t" style='top:635px;font-size:15px;color:#1a1a1a;left:1741.2px;letter-spacing:-0.02px;font-weight:bold;'>Завершить</span>
<span class="t" style='top:707px;font-size:15px;color:#555;left:1619.6px;letter-spacing:0.16px;'>* Частота обновления данных - 5 сек</span>
</body>
</html>
